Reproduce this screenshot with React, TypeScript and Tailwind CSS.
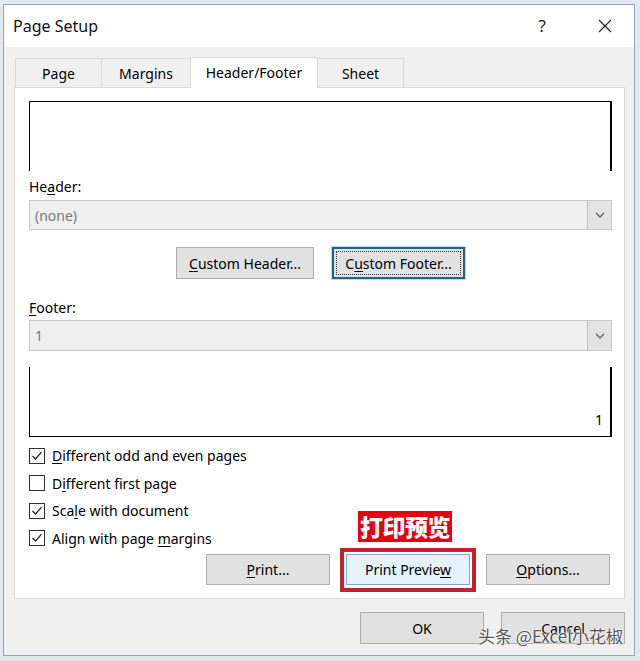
import React from "react";

function Btn({
  children,
  w,
  className = "",
}: {
  children: React.ReactNode;
  w: string;
  className?: string;
}) {
  return (
    <div
      className={`${w} h-full flex items-center justify-center border border-[#adadad] bg-[#e1e1e1] text-[14px] text-black ${className}`}
    >
      {children}
    </div>
  );
}

function Dropdown({ value }: { value: string }) {
  return (
    <div className="flex h-full w-full border border-[#c9c9c9] bg-[#efefef]">
      <div className="flex flex-1 items-center pl-[5px] text-[14px] text-[#7a7a7a]">{value}</div>
      <div className="flex w-[24px] items-center justify-center border-l border-[#c2c2c2] bg-[#e3e3e3]">
        <svg width="10" height="6" viewBox="0 0 10 6">
          <polyline points="1,1 5,5 9,1" fill="none" stroke="#555" strokeWidth="1.1" />
        </svg>
      </div>
    </div>
  );
}

function Check({ checked, children }: { checked: boolean; children: React.ReactNode }) {
  return (
    <div className="flex h-[27.5px] items-center">
      <div className="flex h-[16px] w-[16px] items-center justify-center border border-[#333] bg-white">
        {checked && (
          <svg width="14" height="14" viewBox="0 0 14 14">
            <polyline points="2.5,7 5.5,10 11.5,3.2" fill="none" stroke="#222" strokeWidth="1.2" />
          </svg>
        )}
      </div>
      <span className="ml-[7px] text-[14px] text-black">{children}</span>
    </div>
  );
}

export default function App() {
  return (
    <div className="relative h-[661px] w-[640px] overflow-hidden bg-[#e2e8ee] pl-[3px] pt-[4px] font-['Segoe_UI','Noto_Sans',sans-serif]">
      <div className="flex h-[652px] w-[632px] flex-col border border-[#8ea6be] bg-[#f0f0f0]">
        {/* title bar */}
        <div className="flex h-[42px] items-center bg-white pl-[9px]">
          <span className="text-[16px] text-[#111]">Page Setup</span>
          <span className="ml-auto text-[17px] text-[#222]">?</span>
          <svg className="ml-[52px] mr-[22px]" width="14" height="14" viewBox="0 0 14 14">
            <line x1="1" y1="1" x2="13" y2="13" stroke="#222" strokeWidth="1.1" />
            <line x1="13" y1="1" x2="1" y2="13" stroke="#222" strokeWidth="1.1" />
          </svg>
        </div>

        {/* body */}
        <div className="flex flex-1 flex-col pl-[10px] pr-[9px] pt-[10px]">
          {/* tabs */}
          <div className="flex h-[30px] items-end pl-[1px]">
            <div className="flex h-[29px] w-[87px] items-center justify-center border border-b-0 border-[#d9d9d9] bg-[#f0f0f0] text-[14px] text-black">
              Page
            </div>
            <div className="-ml-px flex h-[29px] w-[90px] items-center justify-center border border-b-0 border-[#d9d9d9] bg-[#f0f0f0] text-[14px] text-black">
              Margins
            </div>
            <div className="relative z-10 -mb-px -ml-px flex h-[31px] w-[128px] items-center justify-center border border-b-0 border-[#d9d9d9] bg-white pb-[2px] text-[14px] text-black">
              Header/Footer
            </div>
            <div className="-ml-px flex h-[29px] w-[87px] items-center justify-center border border-b-0 border-[#d9d9d9] bg-[#f0f0f0] text-[14px] text-black">
              Sheet
            </div>
          </div>

          {/* panel */}
          <div className="flex h-[512px] flex-col border border-[#d9d9d9] bg-white pl-[14px] pr-[12px] pt-[13px]">
            <div className="h-[70px] w-full border-l border-r-2 border-t border-black" />
            <div className="mt-[7px] text-[14px] leading-[18px] text-black">
              He<u className="underline-offset-2">a</u>der:
            </div>
            <div className="mt-[4px] h-[30px]">
              <Dropdown value="(none)" />
            </div>
            <div className="mt-[17px] flex h-[32px] justify-center gap-[18px]">
              <Btn w="w-[138px]">
                <span>
                  <u className="underline-offset-2">C</u>ustom Header...
                </span>
              </Btn>
              <div className="flex h-full w-[133px] items-center justify-center border-2 border-[#22618f] bg-[#e1e1e1] p-[2px] shadow-[0_0_0_1px_#b9dcf3]">
                <div className="flex h-full w-full items-center justify-center border border-dotted border-[#333] text-[14px] text-black">
                  <span>
                    C<u className="underline-offset-2">u</u>stom Footer...
                  </span>
                </div>
              </div>
            </div>
            <div className="mt-[20px] text-[14px] leading-[18px] text-black">
              <u className="underline-offset-2">F</u>ooter:
            </div>
            <div className="mt-[3px] h-[31px]">
              <Dropdown value="1" />
            </div>
            <div className="mt-[16px] flex h-[70px] w-full items-end justify-end border-b border-l border-r-2 border-black pb-[9px] pr-[7px]">
              <span className="text-[14px] leading-none text-black">1</span>
            </div>
            <div className="mt-[5px] flex flex-col">
              <Check checked>
                <u className="underline-offset-2">D</u>ifferent odd and even pages
              </Check>
              <Check checked={false}>
                D<u className="underline-offset-2">i</u>fferent first page
              </Check>
              <Check checked>
                Sca<u className="underline-offset-2">l</u>e with document
              </Check>
              <Check checked>
                Align with page <u className="underline-offset-2">m</u>argins
              </Check>
            </div>
            <div className="mr-[2px] mt-[2px] flex h-[31px] justify-end gap-[16px]">
              <Btn w="w-[124px]">
                <span>
                  <u className="underline-offset-2">P</u>rint...
                </span>
              </Btn>
              <div className="relative h-full w-[124px]">
                <div className="flex h-full w-full items-center justify-center border border-[#86a8c8] bg-[#e5f1fb] text-[14px] text-black">
                  <span>
                    Print Previe<u className="underline-offset-2">w</u>
                  </span>
                </div>
                <div className="pointer-events-none absolute -bottom-[7px] -left-[6px] -right-[6px] -top-[6px] border-[4px] border-[#c8202c]" />
                <div className="absolute -top-[43px] left-[12px] flex h-[31px] w-[94px] items-center justify-center bg-[#e60012] font-['Noto_Sans_CJK_SC',sans-serif] text-[23px] font-black leading-none tracking-[-0.5px] text-white">
                  打印预览
                </div>
              </div>
              <Btn w="w-[124px]">
                <span>
                  <u className="underline-offset-2">O</u>ptions...
                </span>
              </Btn>
            </div>
          </div>

          {/* bottom buttons */}
          <div className="mt-[13px] flex h-[32px] justify-end gap-[17px]">
            <Btn w="w-[124px]">OK</Btn>
            <Btn w="w-[124px]">Cancel</Btn>
          </div>
        </div>
      </div>

      {/* watermark */}
      <div className="absolute left-[478px] top-[624px] whitespace-nowrap font-['Noto_Sans_CJK_SC',sans-serif] text-[17px] leading-[24px] text-[#555] [text-shadow:0_0_2px_#fff,0_0_2px_#fff,0_0_1px_#fff]">
        头条 @Excel小花椒
      </div>
    </div>
  );
}
